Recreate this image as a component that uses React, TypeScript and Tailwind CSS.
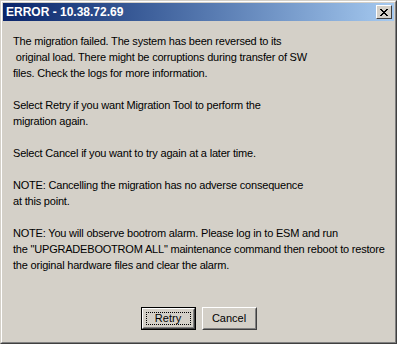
import React from 'react'

const lines = [
  'The migration failed. The system has been reversed to its',
  ' original load. There might be corruptions during transfer of SW',
  'files. Check the logs for more information.',
  '',
  'Select Retry if you want Migration Tool to perform the',
  'migration again.',
  '',
  'Select Cancel if you want to try again at a later time.',
  '',
  'NOTE: Cancelling the migration has no adverse consequence',
  'at this point.',
  '',
  'NOTE: You will observe bootrom alarm. Please log in to ESM and run',
  'the "UPGRADEBOOTROM ALL" maintenance command then reboot to restore',
  'the original hardware files and clear the alarm.',
]

function CloseGlyph() {
  return (
    <svg width="8" height="7" viewBox="0 0 8 7" shapeRendering="crispEdges">
      <path d="M0 0h2v1h-2zM6 0h2v1h-2zM1 1h2v1h-2zM5 1h2v1h-2zM2 2h4v1h-4zM3 3h2v1h-2zM2 4h4v1h-4zM1 5h2v1h-2zM5 5h2v1h-2zM0 6h2v1h-2zM6 6h2v1h-2z" fill="#000" />
    </svg>
  )
}

export default function App() {
  return (
    <div className="w-[397px] h-[344px] bg-[#d4d0c8] border border-t-[#d4d0c8] border-l-[#d4d0c8] border-r-[#404040] border-b-[#404040] text-black" style={{ fontFamily: '"Liberation Sans", Arial, sans-serif' }}>
      <div className="h-full border border-t-white border-l-white border-r-[#808080] border-b-[#808080] p-px flex flex-col">
        {/* title bar */}
        <div className="h-[18px] flex items-center justify-between pl-[3px] pr-[2px] bg-gradient-to-r from-[#0a246a] to-[#a6caf0]">
          <span className="text-white font-bold text-[12px] leading-none">ERROR - 10.38.72.69</span>
          <div className="w-4 h-[14px] bg-[#d4d0c8] border border-t-white border-l-white border-r-[#404040] border-b-[#404040] flex items-center justify-center">
            <CloseGlyph />
          </div>
        </div>

        <div className="flex-1 flex flex-col pl-[10px] pt-[12px]">
          <div className="text-[11px] leading-[16px] tracking-[-0.2px] whitespace-pre">
            {lines.map((l, i) => (
              <div key={i} className="h-4">{l}</div>
            ))}
          </div>

          <div className="mt-auto mb-[11px] flex justify-center gap-[6px] pr-[10px]">
            <button className="w-[55px] h-[23px] border border-black bg-[#d4d0c8] p-0">
              <div className="h-full border border-t-white border-l-white border-r-[#404040] border-b-[#404040]">
                <div className="h-full border border-transparent border-r-[#808080] border-b-[#808080] p-[2px]">
                  <div className="h-full border border-dotted border-black flex items-center justify-center text-[11px] leading-none">Retry</div>
                </div>
              </div>
            </button>
            <button className="w-[55px] h-[23px] border border-t-white border-l-white border-r-[#404040] border-b-[#404040] bg-[#d4d0c8] p-0">
              <div className="h-full border border-transparent border-r-[#808080] border-b-[#808080] flex items-center justify-center text-[11px] leading-none">Cancel</div>
            </button>
          </div>
        </div>
      </div>
    </div>
  )
}
